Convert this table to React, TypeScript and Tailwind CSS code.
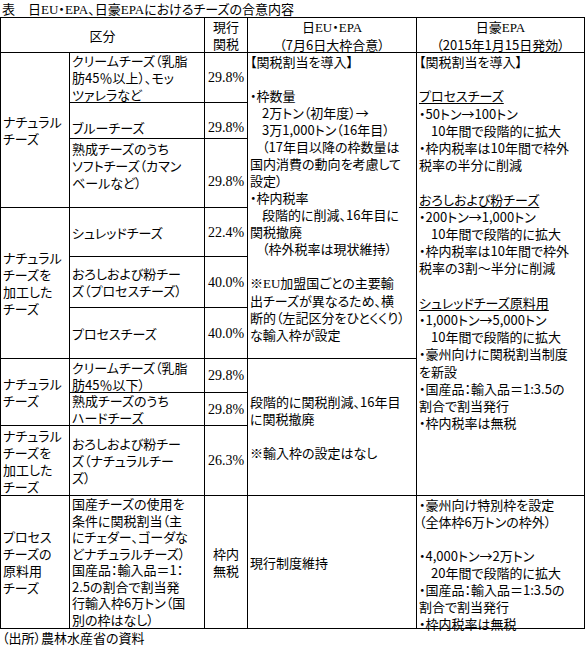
import type { ReactNode } from 'react';

const serif = "font-['Liberation_Serif','Noto_Sans_CJK_JP',serif]";

// '' = blank line, leading '　' = indented line, leading '_' = underlined heading
function Lines({ lines }: { lines: ReactNode[] }) {
  return (
    <>
      {lines.map((l, i) => {
        if (typeof l === 'string') {
          if (l === '') return <div key={i}>{'\u00a0'}</div>;
          if (l.startsWith('　')) return <div key={i} className="whitespace-nowrap pl-[12px]">{l.slice(1)}</div>;
          if (l.startsWith('_'))
            return (
              <div key={i} className="whitespace-nowrap">
                <span className="underline underline-offset-[2px]">{l.slice(1)}</span>
              </div>
            );
          return <div key={i} className="whitespace-nowrap">{l}</div>;
        }
        return <div key={i} className="whitespace-nowrap">{l}</div>;
      })}
    </>
  );
}

function Cell({ className = '', children }: { className?: string; children: ReactNode }) {
  return <div className={`flex flex-col bg-white px-[2px] ${className}`}>{children}</div>;
}

function Rate({ className = '', value }: { className?: string; value: string }) {
  return (
    <Cell className={`items-center justify-center ${className}`}>
      <span className={`${serif} text-[14px]`}>{value}</span>
    </Cell>
  );
}

const euLines: ReactNode[] = [
  '【関税割当を導入】',
  '',
  '・枠数量',
  '　2万トン（初年度）→',
  '　3万1,000トン（16年目）',
  '　（17年目以降の枠数量は',
  '国内消費の動向を考慮して',
  '設定）',
  '・枠内税率',
  '　段階的に削減、16年目に',
  '関税撤廃',
  '　（枠外税率は現状維持）',
  '',
  <>
    ※<span className={serif}>EU</span>加盟国ごとの主要輸
  </>,
  '出チーズが異なるため、横',
  '断的（左記区分をひとくくり）',
  'な輸入枠が設定',
];

const ausLines: ReactNode[] = [
  '【関税割当を導入】',
  '',
  '_プロセスチーズ',
  '・50トン→100トン',
  '　10年間で段階的に拡大',
  '・枠内税率は10年間で枠外',
  '税率の半分に削減',
  '',
  '_おろしおよび粉チーズ',
  '・200トン→1,000トン',
  '　10年間で段階的に拡大',
  '・枠内税率は10年間で枠外',
  '税率の3割～半分に削減',
  '',
  '_シュレッドチーズ原料用',
  '・1,000トン→5,000トン',
  '　10年間で段階的に拡大',
  '・豪州向けに関税割当制度',
  'を新設',
  '・国産品：輸入品＝1:3.5の',
  '割合で割当発行',
  '・枠内税率は無税',
];

export default function App() {
  return (
    <div className="w-[587px] h-[650px] bg-white text-black text-[13px] leading-[17px] font-['Noto_Sans_CJK_JP','Noto_Sans_CJK_SC',sans-serif] [font-feature-settings:'palt']">
      {/* Title */}
      <div className="h-[17px] pl-[2px] whitespace-nowrap">
        表　日<span className={serif}>EU</span>・<span className={serif}>EPA</span>、日豪
        <span className={serif}>EPA</span>におけるチーズの合意内容
      </div>

      {/* Table */}
      <div className="grid w-[585px] grid-cols-[68px_134px_42px_168px_167px] grid-rows-[34px_49px_35px_68px_48px_50px_50px_33px_32px_69px_132px] gap-px bg-black p-px">
        {/* Header */}
        <Cell className="col-span-2 col-start-1 row-start-1 items-center justify-center">区分</Cell>
        <Cell className="col-start-3 row-start-1 items-center justify-center text-center">
          <div>現行</div>
          <div>関税</div>
        </Cell>
        <Cell className="col-start-4 row-start-1 items-center justify-center text-center">
          <div>
            日<span className={serif}>EU</span>・<span className={serif}>EPA</span>
          </div>
          <div>（7月6日大枠合意）</div>
        </Cell>
        <Cell className="col-start-5 row-start-1 items-center justify-center text-center">
          <div>
            日豪<span className={serif}>EPA</span>
          </div>
          <div>（2015年1月15日発効）</div>
        </Cell>

        {/* Natural cheese */}
        <Cell className="col-start-1 row-span-3 row-start-2 justify-center">
          <Lines lines={['ナチュラル', 'チーズ']} />
        </Cell>
        <Cell className="col-start-2 row-start-2 justify-center">
          <Lines lines={['クリームチーズ（乳脂', '肪45％以上）、モッ', 'ツァレラなど']} />
        </Cell>
        <Rate className="col-start-3 row-start-2" value="29.8%" />
        <Cell className="col-start-2 row-start-3 justify-end pb-[2px]">
          <Lines lines={['ブルーチーズ']} />
        </Cell>
        <Rate className="col-start-3 row-start-3 justify-end pb-[2px]" value="29.8%" />
        <Cell className="col-start-2 row-start-4 pt-[1px]">
          <Lines lines={['熟成チーズのうち', 'ソフトチーズ（カマン', 'ベールなど）']} />
        </Cell>
        <Rate className="col-start-3 row-start-4 pt-[16px]" value="29.8%" />

        {/* EU column, rows 1-6 */}
        <Cell className="col-start-4 row-span-6 row-start-2">
          <Lines lines={euLines} />
        </Cell>

        {/* Australia column, rows 1-9 */}
        <Cell className="col-start-5 row-span-9 row-start-2 leading-[17.2px]">
          <Lines lines={ausLines} />
        </Cell>

        {/* Processed natural cheese */}
        <Cell className="col-start-1 row-span-3 row-start-5 justify-center">
          <Lines lines={['ナチュラル', 'チーズを', '加工した', 'チーズ']} />
        </Cell>
        <Cell className="col-start-2 row-start-5 justify-center">
          <Lines lines={['シュレッドチーズ']} />
        </Cell>
        <Rate className="col-start-3 row-start-5" value="22.4%" />
        <Cell className="col-start-2 row-start-6 justify-center">
          <Lines lines={['おろしおよび粉チー', 'ズ（プロセスチーズ）']} />
        </Cell>
        <Rate className="col-start-3 row-start-6" value="40.0%" />
        <Cell className="col-start-2 row-start-7 justify-center">
          <Lines lines={['プロセスチーズ']} />
        </Cell>
        <Rate className="col-start-3 row-start-7" value="40.0%" />

        {/* Natural cheese (2) */}
        <Cell className="col-start-1 row-span-2 row-start-8 justify-center">
          <Lines lines={['ナチュラル', 'チーズ']} />
        </Cell>
        <Cell className="col-start-2 row-start-8 justify-center">
          <Lines lines={['クリームチーズ（乳脂', '肪45％以下）']} />
        </Cell>
        <Rate className="col-start-3 row-start-8" value="29.8%" />
        <Cell className="col-start-2 row-start-9 justify-center">
          <Lines lines={['熟成チーズのうち', 'ハードチーズ']} />
        </Cell>
        <Rate className="col-start-3 row-start-9" value="29.8%" />

        <Cell className="col-start-4 row-span-3 row-start-8 justify-center">
          <Lines lines={['段階的に関税削減、16年目', 'に関税撤廃', '', '※輸入枠の設定はなし']} />
        </Cell>

        <Cell className="col-start-1 row-start-10 justify-center">
          <Lines lines={['ナチュラル', 'チーズを', '加工した', 'チーズ']} />
        </Cell>
        <Cell className="col-start-2 row-start-10 justify-center">
          <Lines lines={['おろしおよび粉チー', 'ズ（ナチュラルチー', 'ズ）']} />
        </Cell>
        <Rate className="col-start-3 row-start-10" value="26.3%" />

        {/* Processed cheese raw material */}
        <Cell className="col-start-1 row-start-11 justify-center">
          <Lines lines={['プロセス', 'チーズの', '原料用', 'チーズ']} />
        </Cell>
        <Cell className="col-start-2 row-start-11 justify-center leading-[16.5px]">
          <Lines
            lines={[
              '国産チーズの使用を',
              '条件に関税割当（主',
              'にチェダー、ゴーダな',
              'どナチュラルチーズ）',
              '国産品：輸入品＝1：',
              '2.5の割合で割当発',
              '行輸入枠6万トン（国',
              '別の枠はなし）',
            ]}
          />
        </Cell>
        <Cell className="col-start-3 row-start-11 items-center justify-center">
          <div>枠内</div>
          <div>無税</div>
        </Cell>
        <Cell className="col-start-4 row-start-11 justify-center">
          <Lines lines={['現行制度維持']} />
        </Cell>
        <Cell className="col-start-5 row-start-11">
          <Lines
            lines={[
              '・豪州向け特別枠を設定',
              '（全体枠6万トンの枠外）',
              '',
              '・4,000トン→2万トン',
              '　20年間で段階的に拡大',
              '・国産品：輸入品＝1:3.5の',
              '割合で割当発行',
              '・枠内税率は無税',
            ]}
          />
        </Cell>
      </div>

      {/* Source */}
      <div className="pl-[2px] whitespace-nowrap">（出所）農林水産省の資料</div>
    </div>
  );
}
